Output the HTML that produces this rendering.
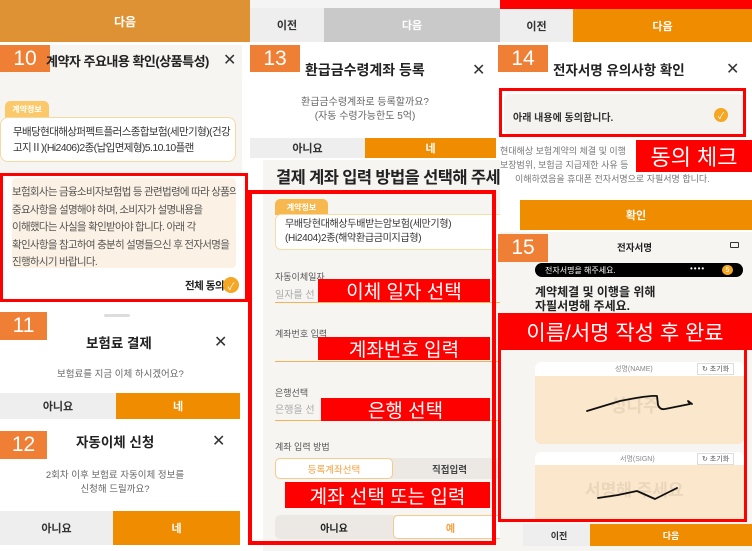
<!DOCTYPE html>
<html><head><meta charset="utf-8"><style>
*{margin:0;padding:0;box-sizing:border-box}
body{width:752px;height:551px;position:relative;overflow:hidden;background:#fff;font-family:"Liberation Sans","Noto Sans CJK KR",sans-serif;color:#222}
.a{position:absolute;white-space:nowrap}
.num{position:absolute;background:#ee7f35;color:#fff;font-size:21px;display:flex;align-items:center;justify-content:center;width:50px;height:27px}
.c{display:flex;align-items:center;justify-content:center}
.ob{background:#f08c00;color:#fff;font-size:11px;font-weight:bold}
.gb{background:#eeeeee;color:#333;font-size:11px;font-weight:bold}
.rl{position:absolute;background:#f00;color:#fff;font-size:19px;display:flex;align-items:center;justify-content:center;white-space:nowrap}
.chk{position:absolute;width:16px;height:16px;border-radius:50%;background:#f5a623;color:#fff;font-size:10px;display:flex;align-items:center;justify-content:center}
.x{position:absolute;font-size:16px;color:#333}
.sm{font-size:10px;color:#666}
</style></head><body>

<!-- LEFT COLUMN -->
<div class="a c" style="left:0;top:0;width:250px;height:42px;background:#df9233;color:#fff;font-size:12px;font-weight:bold">다음</div>
<div class="a" style="left:0;top:45px;width:242px;height:128px;background:#f7f5f2"></div>
<div class="num" style="left:0;top:45px">10</div>
<div class="a" style="left:46px;top:51px;font-size:13px;font-weight:bold;letter-spacing:-0.5px">계약자 주요내용 확인(상품특성)</div>
<div class="x" style="left:223px;top:50px">✕</div>
<div class="a c" style="left:5px;top:101px;width:44px;height:17px;background:#fcc96a;color:#fff;font-size:8px;font-weight:bold;border-radius:5px 5px 0 0">계약정보</div>
<div class="a" style="left:0;top:117px;width:236px;height:45px;background:#fff;border:1px solid #f6d9a0;border-radius:8px;font-size:10.5px;line-height:16px;padding:6px 0 0 12px;color:#333;letter-spacing:-0.6px">무배당현대해상퍼펙트플러스종합보험(세만기형)(건강<br>고지Ⅱ)(Hi2406)2종(납입면제형)5.10.10플랜</div>
<div class="a" style="left:0;top:173px;width:248px;height:129px;border:3px solid #f00;background:#fff"></div>
<div class="a" style="left:12px;top:178px;width:224px;height:90px;background:#fbf1e4;border-radius:4px;font-size:10.5px;line-height:17.5px;color:#555;padding:6px 0 0 0;letter-spacing:-0.7px;overflow:hidden">보험회사는 금융소비자보험법 등 관련법령에 따라 상품의<br>중요사항을 설명해야 하며, 소비자가 설명내용을<br>이해했다는 사실을 확인받아야 합니다. 아래 각<br>확인사항을 참고하여 충분히 설명들으신 후 전자서명을<br>진행하시기 바랍니다.</div>
<div class="a" style="left:185px;top:278px;font-size:10.5px;font-weight:bold;letter-spacing:-0.5px">전체 동의</div>
<div class="chk" style="left:223px;top:277px">✓</div>

<div class="a" style="left:104px;top:314px;width:26px;height:3px;background:#ddd;border-radius:2px"></div>
<div class="num" style="left:0;top:312px;width:47px;height:28px">11</div>
<div class="a" style="left:86px;top:332px;font-size:13.5px;font-weight:bold">보험료 결제</div>
<div class="x" style="left:214px;top:332px">✕</div>
<div class="a sm" style="left:57px;top:366px;font-size:9.5px">보험료를 지금 이체 하시겠어요?</div>
<div class="a c gb" style="left:0;top:393px;width:116px;height:26px">아니요</div>
<div class="a c ob" style="left:116px;top:393px;width:124px;height:26px">네</div>
<div class="num" style="left:0;top:431px;width:47px;height:28px">12</div>
<div class="a" style="left:76px;top:431px;font-size:13.5px;font-weight:bold">자동이체 신청</div>
<div class="x" style="left:212px;top:431px">✕</div>
<div class="a sm" style="left:30px;top:469px;width:170px;text-align:center;line-height:14px;font-size:9.5px">2회차 이후 보험료 자동이체 정보를<br>신청해 드릴까요?</div>
<div class="a c gb" style="left:0;top:511px;width:113px;height:34px">아니요</div>
<div class="a c ob" style="left:113px;top:511px;width:127px;height:34px">네</div>

<!-- MIDDLE COLUMN -->
<div class="a" style="left:250px;top:0;width:250px;height:8px;background:#f4f4f4"></div>
<div class="a c gb" style="left:250px;top:8px;width:74px;height:34px">이전</div>
<div class="a c" style="left:324px;top:8px;width:176px;height:34px;background:#c9c9c9;color:#fff;font-size:11px;font-weight:bold">다음</div>
<div class="num" style="left:250px;top:45px">13</div>
<div class="a" style="left:305px;top:60px;font-size:14px;font-weight:bold">환급금수령계좌 등록</div>
<div class="x" style="left:472px;top:60px">✕</div>
<div class="a sm" style="left:290px;top:96px;width:150px;text-align:center;line-height:14px">환급금수령계좌로 등록할까요?<br>(자동 수령가능한도 5억)</div>
<div class="a c gb" style="left:250px;top:138px;width:115px;height:20px">아니요</div>
<div class="a c ob" style="left:365px;top:138px;width:131px;height:20px">네</div>
<div class="a" style="left:263px;top:160px;width:240px;height:391px;background:#f7f5f2"></div>
<div class="a" style="left:276px;top:164px;font-size:16.5px;font-weight:bold;letter-spacing:-0.6px">결제 계좌 입력 방법을 선택해 주세요.</div>
<div class="a c" style="left:275px;top:199px;width:53px;height:16px;background:#f7b94f;color:#fff;font-size:8px;font-weight:bold;border-radius:5px 5px 0 0">계약정보</div>
<div class="a" style="left:275px;top:214px;width:240px;height:36px;background:#fff;border:1px solid #f7dca6;border-radius:6px;font-size:10px;line-height:14px;padding:3px 0 0 9px;color:#333;letter-spacing:-0.3px">무배당현대해상두배받는암보험(세만기형)<br>(Hi2404)2종(해약환급금미지급형)</div>
<div class="a" style="left:275px;top:270px;font-size:9px;color:#555">자동이체일자</div>
<div class="a" style="left:275px;top:286px;font-size:10px;color:#aaa">일자를 선</div>
<div class="a" style="left:275px;top:302px;width:230px;height:1px;background:#f4b155"></div>
<div class="a" style="left:275px;top:327px;font-size:9px;color:#555">계좌번호 입력</div>
<div class="a" style="left:275px;top:361px;width:230px;height:1px;background:#f4b155"></div>
<div class="a" style="left:275px;top:386px;font-size:9px;color:#555">은행선택</div>
<div class="a" style="left:275px;top:401px;font-size:10px;color:#aaa">은행을 선</div>
<div class="a" style="left:275px;top:420px;width:230px;height:1px;background:#f4b155"></div>
<div class="a" style="left:275px;top:440px;font-size:9px;color:#555">계좌 입력 방법</div>
<div class="a" style="left:275px;top:458px;width:230px;height:21px;background:#ece9e5;border-radius:5px"></div>
<div class="a c" style="left:275px;top:458px;width:118px;height:21px;background:#fff;border:1px solid #f7c98a;border-radius:5px;font-size:9.5px;color:#f4a040">등록계좌선택</div>
<div class="a" style="left:432px;top:462px;font-size:9.5px;color:#444;font-weight:bold">직접입력</div>
<div class="a" style="left:275px;top:515px;width:225px;height:24px;background:#ece9e5;border-radius:5px"></div>
<div class="a c" style="left:275px;top:515px;width:118px;height:24px;font-size:10px;font-weight:bold">아니요</div>
<div class="a c" style="left:393px;top:515px;width:115px;height:24px;background:#fff;border:1px solid #f7c98a;border-radius:5px;font-size:10px;color:#f4a040;font-weight:bold">예</div>
<div class="a" style="left:248px;top:190px;width:248px;height:355px;border:4px solid #f00"></div>
<div class="rl" style="left:318px;top:279px;width:172px;height:23px">이체 일자 선택</div>
<div class="rl" style="left:318px;top:337px;width:172px;height:23px">계좌번호 입력</div>
<div class="rl" style="left:321px;top:398px;width:169px;height:23px">은행 선택</div>
<div class="rl" style="left:285px;top:482px;width:205px;height:26px">계좌 선택 또는 입력</div>

<!-- RIGHT COLUMN -->
<div class="a" style="left:500px;top:0;width:252px;height:9px;background:#f00"></div>
<div class="a c gb" style="left:500px;top:9px;width:73px;height:33px">이전</div>
<div class="a c ob" style="left:573px;top:9px;width:179px;height:33px">다음</div>
<div class="a" style="left:500px;top:42px;width:252px;height:190px;background:#fff"></div>
<div class="num" style="left:498px;top:45px">14</div>
<div class="a" style="left:553px;top:59px;font-size:13.5px;font-weight:bold">전자서명 유의사항 확인</div>
<div class="x" style="left:726px;top:59px">✕</div>
<div class="a" style="left:504px;top:94px;width:240px;height:40px;background:#f5f3f0;border-radius:5px"></div>
<div class="a" style="left:499px;top:88px;width:247px;height:49px;border:3px solid #f00"></div>
<div class="a" style="left:513px;top:109px;font-size:10px;font-weight:bold;color:#333">아래 내용에 동의합니다.</div>
<div class="chk" style="left:714px;top:108px;width:14px;height:14px;font-size:9px">✓</div>
<div class="a" style="left:500px;top:144px;font-size:9px;line-height:14px;color:#777">현대해상 보험계약의 체결 및 이행<br>보장범위, 보험금 지급제한 사유 등<br>&nbsp;&nbsp;&nbsp;&nbsp;&nbsp;&nbsp;이해하였음을 휴대폰 전자서명으로 자필서명 합니다.</div>
<div class="rl" style="left:636px;top:140px;width:116px;height:32px;font-size:22px">동의 체크</div>
<div class="a c ob" style="left:520px;top:200px;width:232px;height:30px">확인</div>
<div class="a" style="left:500px;top:232px;width:252px;height:319px;background:#f7f5f2"></div>
<div class="num" style="left:498px;top:234px;height:28px">15</div>
<div class="a" style="left:617px;top:240px;font-size:9.5px;font-weight:bold">전자서명</div>
<div class="a" style="left:730px;top:242px;width:9px;height:6px;border:1px solid #333;border-radius:1px"></div>
<div class="a" style="left:535px;top:263px;width:208px;height:14px;background:#000;border-radius:7px"></div>
<div class="a" style="left:545px;top:265px;font-size:8px;color:#fff">전자서명을 해주세요.</div>
<div class="a" style="left:690px;top:264px;font-size:8px;color:#fff;letter-spacing:1px">••••</div>
<div class="a c" style="left:722px;top:265px;width:11px;height:10px;border-radius:5px;background:#f5a623;color:#fff;font-size:7px">5</div>
<div class="a" style="left:535px;top:285px;font-size:12px;font-weight:bold;line-height:14px">계약체결 및 이행을 위해<br>자필서명해 주세요.</div>
<div class="a" style="left:535px;top:362px;width:209px;height:82px;background:#fbe7cb;border-radius:6px;overflow:hidden">
 <div style="height:14px;background:#fff;position:relative"><span style="position:absolute;left:80px;top:2px;font-size:7px;color:#888">성명(NAME)</span><span style="position:absolute;left:162px;top:1px;font-size:7px;border:1px solid #ddd;padding:0 4px;color:#555">↻ 초기화</span></div>
 <div style="position:absolute;left:75px;top:30px;font-size:18px;color:#ead6bb;font-weight:bold">성다주</div>
</div>
<div class="a" style="left:535px;top:452px;width:209px;height:70px;background:#fbe7cb;border-radius:6px;overflow:hidden">
 <div style="height:13px;background:#fff;position:relative"><span style="position:absolute;left:85px;top:2px;font-size:7px;color:#888">서명(SIGN)</span><span style="position:absolute;left:162px;top:1px;font-size:7px;border:1px solid #ddd;padding:0 4px;color:#555">↻ 초기화</span></div>
 <div style="position:absolute;left:50px;top:24px;font-size:17px;color:#ead6bb;font-weight:bold">서명해 주세요</div>
</div>
<svg class="a" style="left:0;top:0" width="752" height="551" fill="none" stroke="#111" stroke-width="1.8" stroke-linecap="round" stroke-linejoin="round">
<path d="M587 411 L620 401 Q650 395 657 396 L658 405 Q660 410 665 409 L690 404 L688 401 L692 404"/>
<path d="M598 498 L618 495 L637 491 L655 499 L677 488"/>
</svg>
<div class="a" style="left:498px;top:313px;width:254px;height:37px;background:#f00"></div>
<div class="a c" style="left:498px;top:313px;width:254px;height:37px;color:#fff;font-size:21px">이름/서명 작성 후 완료</div>
<div class="a" style="left:498px;top:348px;width:249px;height:174px;border:3px solid #f00;border-top:none"></div>
<div class="a c gb" style="left:523px;top:524px;width:72px;height:22px;font-size:9px">이전</div>
<div class="a c ob" style="left:590px;top:524px;width:162px;height:22px;font-size:9px">다음</div>
</body></html>
